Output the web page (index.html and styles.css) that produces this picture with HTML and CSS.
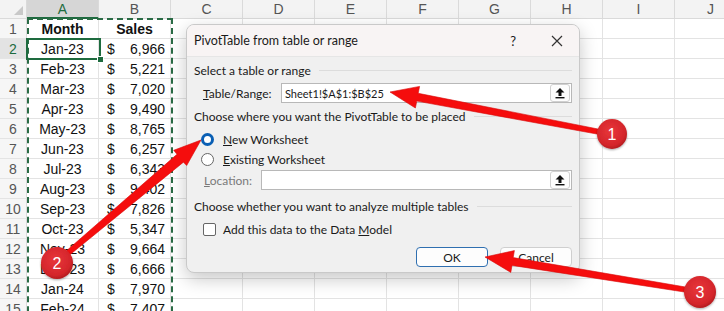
FILE: index.html
```html
<!DOCTYPE html>
<html lang="en">
<head>
    <meta charset="UTF-8">
    <meta name="viewport" content="width=device-width, initial-scale=1.0">
    <title>PivotTable from table or range</title>
    <link rel="stylesheet" href="styles.css">
</head>
<body>
    <div class="sheet">
        <div class="row head-row">
            <div class="corner"><span class="corner-mark"></span></div>
            <div class="col-head active">A</div>
            <div class="col-head">B</div>
            <div class="col-head">C</div>
            <div class="col-head">D</div>
            <div class="col-head">E</div>
            <div class="col-head">F</div>
            <div class="col-head">G</div>
            <div class="col-head">H</div>
            <div class="col-head">I</div>
            <div class="col-head">J</div>
        </div>
        <div class="row">
            <div class="row-head">1</div>
            <div class="cell center bold">Month</div>
            <div class="cell center bold">Sales</div>
            <div class="cell"></div><div class="cell"></div><div class="cell"></div><div class="cell"></div><div class="cell"></div><div class="cell"></div><div class="cell"></div><div class="cell"></div>
        </div>
        <div class="row">
            <div class="row-head active">2</div>
            <div class="cell center">Jan-23</div>
            <div class="cell money"><span>$</span><span>6,966</span></div>
            <div class="cell"></div><div class="cell"></div><div class="cell"></div><div class="cell"></div><div class="cell"></div><div class="cell"></div><div class="cell"></div><div class="cell"></div>
        </div>
        <div class="row">
            <div class="row-head">3</div>
            <div class="cell center">Feb-23</div>
            <div class="cell money"><span>$</span><span>5,221</span></div>
            <div class="cell"></div><div class="cell"></div><div class="cell"></div><div class="cell"></div><div class="cell"></div><div class="cell"></div><div class="cell"></div><div class="cell"></div>
        </div>
        <div class="row">
            <div class="row-head">4</div>
            <div class="cell center">Mar-23</div>
            <div class="cell money"><span>$</span><span>7,020</span></div>
            <div class="cell"></div><div class="cell"></div><div class="cell"></div><div class="cell"></div><div class="cell"></div><div class="cell"></div><div class="cell"></div><div class="cell"></div>
        </div>
        <div class="row">
            <div class="row-head">5</div>
            <div class="cell center">Apr-23</div>
            <div class="cell money"><span>$</span><span>9,490</span></div>
            <div class="cell"></div><div class="cell"></div><div class="cell"></div><div class="cell"></div><div class="cell"></div><div class="cell"></div><div class="cell"></div><div class="cell"></div>
        </div>
        <div class="row">
            <div class="row-head">6</div>
            <div class="cell center">May-23</div>
            <div class="cell money"><span>$</span><span>8,765</span></div>
            <div class="cell"></div><div class="cell"></div><div class="cell"></div><div class="cell"></div><div class="cell"></div><div class="cell"></div><div class="cell"></div><div class="cell"></div>
        </div>
        <div class="row">
            <div class="row-head">7</div>
            <div class="cell center">Jun-23</div>
            <div class="cell money"><span>$</span><span>6,257</span></div>
            <div class="cell"></div><div class="cell"></div><div class="cell"></div><div class="cell"></div><div class="cell"></div><div class="cell"></div><div class="cell"></div><div class="cell"></div>
        </div>
        <div class="row">
            <div class="row-head">8</div>
            <div class="cell center">Jul-23</div>
            <div class="cell money"><span>$</span><span>6,343</span></div>
            <div class="cell"></div><div class="cell"></div><div class="cell"></div><div class="cell"></div><div class="cell"></div><div class="cell"></div><div class="cell"></div><div class="cell"></div>
        </div>
        <div class="row">
            <div class="row-head">9</div>
            <div class="cell center">Aug-23</div>
            <div class="cell money"><span>$</span><span>9,402</span></div>
            <div class="cell"></div><div class="cell"></div><div class="cell"></div><div class="cell"></div><div class="cell"></div><div class="cell"></div><div class="cell"></div><div class="cell"></div>
        </div>
        <div class="row">
            <div class="row-head">10</div>
            <div class="cell center">Sep-23</div>
            <div class="cell money"><span>$</span><span>7,826</span></div>
            <div class="cell"></div><div class="cell"></div><div class="cell"></div><div class="cell"></div><div class="cell"></div><div class="cell"></div><div class="cell"></div><div class="cell"></div>
        </div>
        <div class="row">
            <div class="row-head">11</div>
            <div class="cell center">Oct-23</div>
            <div class="cell money"><span>$</span><span>5,347</span></div>
            <div class="cell"></div><div class="cell"></div><div class="cell"></div><div class="cell"></div><div class="cell"></div><div class="cell"></div><div class="cell"></div><div class="cell"></div>
        </div>
        <div class="row">
            <div class="row-head">12</div>
            <div class="cell center">Nov-23</div>
            <div class="cell money"><span>$</span><span>9,664</span></div>
            <div class="cell"></div><div class="cell"></div><div class="cell"></div><div class="cell"></div><div class="cell"></div><div class="cell"></div><div class="cell"></div><div class="cell"></div>
        </div>
        <div class="row">
            <div class="row-head">13</div>
            <div class="cell center">Dec-23</div>
            <div class="cell money"><span>$</span><span>6,666</span></div>
            <div class="cell"></div><div class="cell"></div><div class="cell"></div><div class="cell"></div><div class="cell"></div><div class="cell"></div><div class="cell"></div><div class="cell"></div>
        </div>
        <div class="row">
            <div class="row-head">14</div>
            <div class="cell center">Jan-24</div>
            <div class="cell money"><span>$</span><span>7,970</span></div>
            <div class="cell"></div><div class="cell"></div><div class="cell"></div><div class="cell"></div><div class="cell"></div><div class="cell"></div><div class="cell"></div><div class="cell"></div>
        </div>
        <div class="row">
            <div class="row-head">15</div>
            <div class="cell center">Feb-24</div>
            <div class="cell money"><span>$</span><span>7,407</span></div>
            <div class="cell"></div><div class="cell"></div><div class="cell"></div><div class="cell"></div><div class="cell"></div><div class="cell"></div><div class="cell"></div><div class="cell"></div>
        </div>

        <!-- copy range and active cell -->
        <div class="copy-range"></div>
        <div class="active-cell"><span class="fill-handle"></span></div>
    </div>

    <div class="dialog">
        <div class="dialog-title">
            <span>PivotTable from table or range</span>
            <span class="title-btns">
                <span class="help">?</span>
                <svg class="close" width="14" height="14" viewBox="0 0 14 14"><path d="M2 2 L12 12 M12 2 L2 12" stroke="#333" stroke-width="1.2" fill="none"/></svg>
            </span>
        </div>
        <div class="dialog-body">
            <div class="group-head"><span>Select a table or range</span><span class="rule"></span></div>
            <div class="field-row">
                <label class="field-label"><u>T</u>able/Range:</label>
                <div class="ref-input">
                    <span class="ref-text">Sheet1!$A$1:$B$25</span>
                    <span class="ref-btn">
                        <svg width="12" height="12" viewBox="0 0 12 12"><path d="M6 1 L10.5 5.5 L7.5 5.5 L7.5 9 L4.5 9 L4.5 5.5 L1.5 5.5 Z" fill="#111"/><rect x="1.5" y="10" width="9" height="1.4" fill="#111"/></svg>
                    </span>
                </div>
            </div>
            <div class="group-head"><span>Choose where you want the PivotTable to be placed</span><span class="rule"></span></div>
            <div class="option"><span class="radio checked"></span><span><u>N</u>ew Worksheet</span></div>
            <div class="option"><span class="radio"></span><span><u>E</u>xisting Worksheet</span></div>
            <div class="field-row loc-row">
                <label class="field-label disabled"><u>L</u>ocation:</label>
                <div class="ref-input">
                    <span class="ref-text"></span>
                    <span class="ref-btn">
                        <svg width="12" height="12" viewBox="0 0 12 12"><path d="M6 1 L10.5 5.5 L7.5 5.5 L7.5 9 L4.5 9 L4.5 5.5 L1.5 5.5 Z" fill="#111"/><rect x="1.5" y="10" width="9" height="1.4" fill="#111"/></svg>
                    </span>
                </div>
            </div>
            <div class="group-head"><span>Choose whether you want to analyze multiple tables</span><span class="rule"></span></div>
            <div class="option check-row"><span class="checkbox"></span><span>Add this data to the Data <u>M</u>odel</span></div>
            <div class="buttons">
                <button type="button" class="btn primary">OK</button>
                <button type="button" class="btn">Cancel</button>
            </div>
        </div>
    </div>

    <svg class="callouts" width="724" height="311" viewBox="0 0 724 311">
        <defs>
            <radialGradient id="badge" cx="45%" cy="40%" r="60%">
                <stop offset="0" stop-color="#e8353a"/>
                <stop offset="0.8" stop-color="#d4262b"/>
                <stop offset="1" stop-color="#b51c20"/>
            </radialGradient>
            <filter id="soft" x="-30%" y="-30%" width="160%" height="160%">
                <feDropShadow dx="0" dy="1" stdDeviation="1.2" flood-color="#000" flood-opacity="0.35"/>
            </filter>
        </defs>
        <g fill="#f50d0d" stroke="#d60a0a" stroke-width="0.6" stroke-linejoin="round">
            <polygon points="390,92 419.6,86.4 418.2,93.3 600.5,129.5 599.5,134.5 416.8,101.1 415.4,108"/>
            <polygon points="201,140 173.7,150.3 177,154.3 60.4,256.1 63.6,259.9 183.4,162.2 186.7,165.5"/>
            <polygon points="485,257 514.4,250.6 513.2,257.6 688.4,287.5 687.6,292.5 512,265.4 510.8,272.4"/>
        </g>
        <g filter="url(#soft)">
            <circle cx="612" cy="134" r="15" fill="url(#badge)"/>
            <circle cx="57" cy="263" r="16" fill="url(#badge)"/>
            <circle cx="700" cy="292" r="16" fill="url(#badge)"/>
        </g>
        <g class="badge-num" fill="#fff" text-anchor="middle">
            <text x="612" y="140">1</text>
            <text x="57" y="269">2</text>
            <text x="700" y="298">3</text>
        </g>
    </svg>
</body>
</html>
```

FILE: styles.css
```css
body {
    margin: 0;
    width: 724px;
    height: 311px;
    overflow: hidden;
    position: relative;
    background: #fff;
    font-family: "Liberation Sans", Arial, sans-serif;
}

.sheet {
    position: relative;
    height: 311px;
    overflow: hidden;
}

.row {
    display: grid;
    grid-template-columns: 27px repeat(10, 72px);
    height: 20px;
}

.head-row {
    height: 19px;
    background: #f3f3f3;
}

.corner {
    position: relative;
    border-right: 1px solid #dadada;
    border-bottom: 1px solid #dadada;
}

.corner-mark {
    position: absolute;
    right: 3px;
    bottom: 3px;
    width: 0;
    height: 0;
    border-left: 9px solid transparent;
    border-bottom: 9px solid #c8c8c8;
}

.col-head {
    display: flex;
    align-items: center;
    justify-content: center;
    font-size: 14px;
    color: #555;
    border-right: 1px solid #dadada;
    border-bottom: 1px solid #dadada;
}

.col-head.active {
    background: #d6d6d6;
    color: #1e6b3f;
    border-bottom: 2px solid #1e6b3f;
}

.row-head {
    display: flex;
    align-items: center;
    justify-content: center;
    font-size: 14px;
    color: #555;
    background: #f6f6f6;
    border-right: 1px solid #dadada;
    border-bottom: 1px solid #e4e4e4;
}

.row-head.active {
    color: #1e6b3f;
    background: #e3e3e3;
}

.cell {
    display: flex;
    align-items: center;
    font-size: 14px;
    color: #111;
    border-right: 1px solid #e3e3e3;
    border-bottom: 1px solid #e3e3e3;
    white-space: nowrap;
    overflow: hidden;
}

.center {
    justify-content: center;
}

.bold {
    font-weight: bold;
}

.money {
    justify-content: space-between;
    padding: 0 5px 0 8px;
}

.copy-range {
    position: absolute;
    left: 27px;
    top: 18px;
    width: 142px;
    height: 320px;
    border: 2px dashed #2a6b45;
}

.active-cell {
    position: absolute;
    left: 26px;
    top: 38px;
    width: 71px;
    height: 18px;
    border: 2px solid #1e6b3f;
}

.fill-handle {
    position: absolute;
    right: -5px;
    bottom: -5px;
    width: 5px;
    height: 5px;
    background: #1e6b3f;
    border: 1px solid #fff;
}

/* dialog */
.dialog {
    position: absolute;
    left: 186px;
    top: 24px;
    width: 392px;
    height: 247px;
    background: #f0f0f0;
    border: 1px solid #c9c9c9;
    border-radius: 8px;
    box-shadow: 0 6px 18px rgba(0, 0, 0, 0.22);
    font-family: Lato, "Noto Sans", sans-serif;
    font-size: 12px;
    color: #1a1a1a;
    overflow: hidden;
}

.dialog-title {
    height: 31px;
    display: flex;
    align-items: center;
    justify-content: space-between;
    padding: 0 15px 0 7px;
    background: #f8f4f4;
    border-bottom: 1px solid #e6e6e6;
    font-size: 12.5px;
}

.title-btns {
    display: flex;
    align-items: center;
    gap: 34px;
}

.help {
    font-size: 13px;
}

.dialog-body {
    padding: 0 7px;
}

.group-head {
    display: flex;
    align-items: center;
    height: 16px;
    margin-top: 5px;
    white-space: nowrap;
}

.group-head .rule {
    flex: 1;
    height: 1px;
    margin-left: 8px;
    background: #dcdcdc;
}

.field-row {
    display: flex;
    align-items: center;
    height: 20px;
    margin-top: 5px;
    padding-left: 9px;
}

.field-label {
    width: 78px;
}

.field-label.disabled {
    width: 57px;
    color: #7a7a7a;
}

.ref-input {
    flex: 1;
    height: 20px;
    box-sizing: border-box;
    display: flex;
    align-items: center;
    justify-content: space-between;
    background: #fff;
    border: 1px solid #b8b8b8;
    padding-left: 3px;
}

.ref-text {
    font-size: 11px;
}

.ref-btn {
    display: flex;
    align-items: center;
    justify-content: center;
    width: 18px;
    height: 16px;
    margin-right: 1px;
    border: 1px solid #d0d0d0;
    border-radius: 3px;
    background: #fdfdfd;
}

.option {
    display: flex;
    align-items: center;
    gap: 9px;
    height: 20px;
    padding-left: 7px;
}

.group-head + .option {
    margin-top: 5px;
}

.radio {
    width: 11px;
    height: 11px;
    border: 1px solid #666;
    border-radius: 50%;
    background: #fff;
}

.radio.checked {
    width: 7px;
    height: 7px;
    border: 3px solid #0a5fb4;
    background: #fff;
}

.loc-row {
    margin-top: 1px;
    padding-left: 10px;
}

.loc-row + .group-head {
    margin-top: 8px;
}

.check-row {
    margin-top: 2px;
    padding-left: 9px;
    gap: 7px;
}

.checkbox {
    width: 11px;
    height: 11px;
    border: 1px solid #666;
    border-radius: 2px;
    background: #fff;
}

.buttons {
    display: flex;
    justify-content: flex-end;
    gap: 12px;
    margin-top: 8px;
}

.btn {
    width: 72px;
    height: 20px;
    padding: 0;
    font-family: Lato, "Noto Sans", sans-serif;
    font-size: 12px;
    color: #1a1a1a;
    background: #fdfdfd;
    border: 1px solid #cfcfcf;
    border-radius: 4px;
}

.btn.primary {
    border: 1px solid #2f6fb0;
}

.callouts {
    position: absolute;
    left: 0;
    top: 0;
}

.badge-num {
    font-family: "Liberation Sans", Arial, sans-serif;
    font-size: 16px;
}
```
